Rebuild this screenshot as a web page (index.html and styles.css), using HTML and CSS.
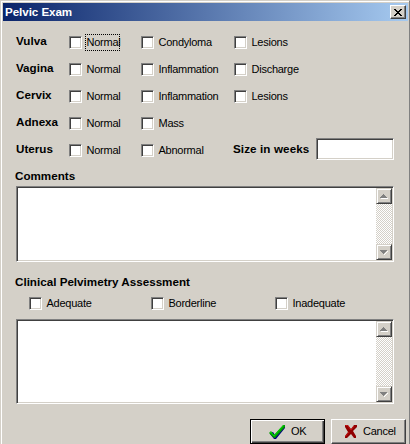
FILE: index.html
```
<!DOCTYPE html>
<html lang="en">
<head>
<meta charset="utf-8">
<title>Pelvic Exam</title>
<link rel="stylesheet" href="styles.css">
</head>
<body>
<main class="window">
  <header class="titlebar"><h1>Pelvic Exam</h1>
    <button class="close" aria-label="Close"><svg width="8" height="7" viewBox="0 0 8 7" shape-rendering="crispEdges"><path d="M0 0h2v1h1v1h2V1h1V0h2v1H7v1H6v1H5v1h1v1h1v1h1v1H6V6H5V5H3v1H2v1H0V6h1V5h1V4h1V3H2V2H1V1H0z"/></svg></button>
  </header>
  <section class="exam">
    <div class="row"><b>Vulva</b><label><i class="box"></i><span class="focus">Normal</span></label><label><i class="box"></i><span>Condyloma</span></label><label><i class="box"></i><span>Lesions</span></label></div>
    <div class="row"><b>Vagina</b><label><i class="box"></i><span>Normal</span></label><label><i class="box"></i><span>Inflammation</span></label><label><i class="box"></i><span>Discharge</span></label></div>
    <div class="row"><b>Cervix</b><label><i class="box"></i><span>Normal</span></label><label><i class="box"></i><span>Inflammation</span></label><label><i class="box"></i><span>Lesions</span></label></div>
    <div class="row"><b>Adnexa</b><label><i class="box"></i><span>Normal</span></label><label><i class="box"></i><span>Mass</span></label></div>
    <div class="row"><b>Uterus</b><label><i class="box"></i><span>Normal</span></label><label><i class="box"></i><span>Abnormal</span></label><div class="size"><b>Size in weeks</b><div class="field"></div></div></div>
  </section>
  <h2 class="comments">Comments</h2>
  <div class="memo memo-a"><div class="scroll"><div class="arrow"><svg width="8" height="5" viewBox="0 0 8 5" shape-rendering="crispEdges"><path fill="#fff" d="M1 4h7v1H1z"/><path fill="#808080" d="M3 0h1v1h1v1h1v1h1v1H0V3h1V2h1V1h1z"/></svg></div><div class="arrow"><svg width="8" height="5" viewBox="0 0 8 5" shape-rendering="crispEdges"><path fill="#fff" d="M7 1h1v1H7v1H6v1H5v1H4V4h1V3h1V2h1z"/><path fill="#808080" d="M0 0h7v1H6v1H5v1H4v1H3V3H2V2H1V1H0z"/></svg></div></div></div>
  <h2 class="clinical">Clinical Pelvimetry Assessment</h2>
  <div class="assessment"><label><i class="box"></i><span>Adequate</span></label><label><i class="box"></i><span>Borderline</span></label><label><i class="box"></i><span>Inadequate</span></label></div>
  <div class="memo memo-b"><div class="scroll"><div class="arrow"><svg width="8" height="5" viewBox="0 0 8 5" shape-rendering="crispEdges"><path fill="#fff" d="M1 4h7v1H1z"/><path fill="#808080" d="M3 0h1v1h1v1h1v1h1v1H0V3h1V2h1V1h1z"/></svg></div><div class="arrow"><svg width="8" height="5" viewBox="0 0 8 5" shape-rendering="crispEdges"><path fill="#fff" d="M7 1h1v1H7v1H6v1H5v1H4V4h1V3h1V2h1z"/><path fill="#808080" d="M0 0h7v1H6v1H5v1H4v1H3V3H2V2H1V1H0z"/></svg></div></div></div>
  <footer>
    <button class="btn ok"><svg width="17" height="16" viewBox="0 0 17 16"><path d="M1 9l3-1 2 3 8-9h2v2L7 15H5L1 10z" fill="#000080"/><path d="M0 9l2-2 3 4 9-10h2v2L6 14H5z" fill="#009a00"/><path d="M1 9l1-1 3 4L14.5 1.5" fill="none" stroke="#00e000"/></svg><span>OK</span></button>
    <button class="btn cancel"><svg width="14" height="15" viewBox="0 0 14 15"><path d="M1 1h3l3 4 3-4h3v2L9 7l3 5v2h-2L7 10l-4 4H1v-2l3-4-3-5z" fill="#900000"/><path d="M1.5 1.5h2L7 6l3-4M1.5 12.5L5 8" fill="none" stroke="#c81414"/></svg><span>Cancel</span></button>
  </footer>
</main>
</body>
</html>
```
FILE: styles.css
```
* { box-sizing: border-box; }
body { margin: 0; overflow: hidden; background: #d4d0c8; color: #000; font: 11px/13px "Liberation Sans", Arial, sans-serif; }
.window { width: 410px; height: 444px; overflow: hidden; border: 1px solid #d4d0c8; border-right-color: #808080; border-bottom: 0; box-shadow: inset 1px 1px #fff; padding: 2px 1px 0 2px; }
h1, h2 { margin: 0; line-height: 13px; }
h2, b { font-size: 11.65px; white-space: nowrap; }
.titlebar { height: 18px; width: 405px; display: flex; align-items: center; justify-content: space-between; padding: 0 2px; background: linear-gradient(90deg, #0a246a, #a6caf0); }
h1 { color: #fff; font-size: 11.6px; letter-spacing: -.05px; padding-bottom: 2px; }
button { font: inherit; color: #000; background: #d4d0c8; border-radius: 0; }
.close { width: 16px; height: 14px; padding: 0; display: flex; align-items: center; justify-content: center; border: 1px solid; border-color: #fff #404040 #404040 #fff; box-shadow: inset -1px -1px #808080; }
.exam { padding: 15px 0 0 13px; }
.row { height: 27px; display: grid; grid-template-columns: 53px 72px 93px 160px; align-items: start; }
label { display: flex; align-items: center; height: 13px; white-space: nowrap; }
label span { padding-left: 4.5px; letter-spacing: -.25px; }
.box { flex: none; width: 13px; height: 13px; background: #fff; border: 1px solid; border-color: #808080 #fff #fff #808080; box-shadow: inset 1px 1px #404040, inset -1px -1px #d4d0c8; }
.row b { margin-top: -2px; }
.focus { outline: 1px dotted #000; outline-offset: 0; padding: 1px 0 1px .5px; margin-left: 4px; width: 33px; }
.size { display: flex; justify-content: space-between; width: 160px; margin: -6px 0 0 -1px; }
.size b { margin-top: 4px; letter-spacing: .1px; }
.field { width: 78px; height: 22px; }
.field, .memo { background: #fff; border: 1px solid; border-color: #808080 #fff #fff #808080; box-shadow: inset 1px 1px #404040, inset -1px -1px #d4d0c8; }
.field { margin-right: -1px; }
.comments { margin: -2px 0 4px 12px; }
.memo { width: 378px; margin-left: 13px; padding: 1px; display: flex; justify-content: flex-end; }
.memo-a { height: 76px; }
.memo-b { height: 85px; margin-top: 9px; }
.scroll { width: 16px; display: flex; flex-direction: column; justify-content: space-between; background: repeating-conic-gradient(#fff 0 25%, #d4d0c8 0 50%) 0 0 / 2px 2px; }
.arrow { height: 16px; display: flex; align-items: center; justify-content: center; background: #d4d0c8; border: 1px solid; border-color: #d4d0c8 #404040 #404040 #d4d0c8; box-shadow: inset 1px 1px #fff, inset -1px -1px #808080; }
.clinical { margin: 13px 0 9px 12px; }
.assessment { display: grid; grid-template-columns: 122px 124px 110px; padding-left: 26px; }
footer { display: flex; gap: 6px; margin: 15px 0 0 247px; }
.btn { width: 75px; height: 25px; display: flex; align-items: center; padding: 0; border: 1px solid; border-color: #fff #404040 #404040 #fff; box-shadow: inset -1px -1px #808080; }
.btn span { letter-spacing: -.25px; }
.ok { border-color: #000; box-shadow: inset 1px 1px #fff, inset -1px -1px #404040, inset -2px -2px #808080; padding-left: 18px; gap: 5px; }
.cancel { padding-left: 12px; gap: 5px; }
```
